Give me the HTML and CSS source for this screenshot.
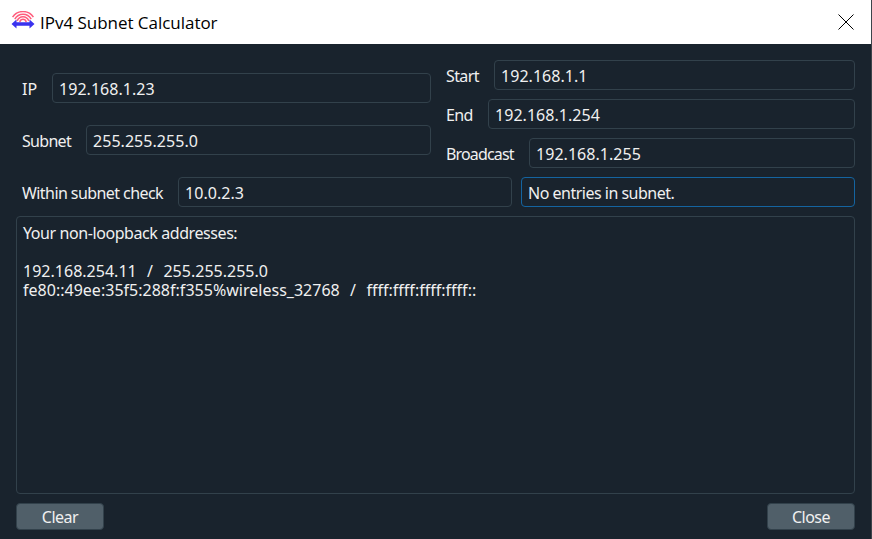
FILE: index.html
```html
<!DOCTYPE html>
<html lang="en">
<head>
<meta charset="utf-8">
<title>IPv4 Subnet Calculator</title>
<link rel="stylesheet" href="styles.css">
</head>
<body>
<div class="window">
  <header class="titlebar">
    <svg class="app-icon" width="24" height="18" viewBox="0 0 24 18">
      <g fill="none" stroke="#ff5c7c" stroke-width="1.5">
        <path d="M1.600 6.200C6.500-1.300 17.500-1.300 22.400 6.200"/>
        <path d="M3.800 8.200C7.500 1.600 16.500 1.600 20.200 8.200"/>
        <path d="M6.200 9.900C8.500 4.500 15.500 4.500 17.800 9.900"/>
        <path d="M8.700 11C10 7.300 14 7.300 15.300 11"/>
      </g>
      <path fill="#3a32ee" d="M.5 13 5.500 8.500V11.200H18.500V8.500L23.500 13 18.500 17.500V14.800H5.500V17.500Z"/>
    </svg>
    <h1 class="title">IPv4 Subnet Calculator</h1>
    <svg class="close-icon" width="16" height="16" viewBox="0 0 16 16"><path d="M.5.500 15.500 15.500M15.500.500.500 15.500" stroke="#000" stroke-width="1"/></svg>
  </header>
  <main class="content">
    <div class="top">
      <div class="inputs">
        <div class="row"><span class="label ip">IP</span><div class="field">192.168.1.23</div></div>
        <div class="row"><span class="label subnet">Subnet</span><div class="field">255.255.255.0</div></div>
      </div>
      <div class="results">
        <div class="row"><span class="label start">Start</span><div class="field">192.168.1.1</div></div>
        <div class="row"><span class="label end">End</span><div class="field">192.168.1.254</div></div>
        <div class="row"><span class="label broadcast">Broadcast</span><div class="field">192.168.1.255</div></div>
      </div>
    </div>
    <div class="row check">
      <span class="label within">Within subnet check</span>
      <div class="field">10.0.2.3</div>
      <div class="field status">No entries in subnet.</div>
    </div>
    <div class="log">
      <p class="line heading">Your non-loopback addresses:</p>
      <p class="line address">192.168.254.11&nbsp; /&nbsp; 255.255.255.0</p>
      <p class="line address">fe80::49ee:35f5:288f:f355%wireless_32768&nbsp; /&nbsp; ffff:ffff:ffff:ffff::</p>
    </div>
    <footer class="actions"><button class="button">Clear</button><button class="button">Close</button></footer>
  </main>
</div>
</body>
</html>
```
FILE: styles.css
```css
* { box-sizing: border-box; }
body { margin: 0; background: #19232d; overflow: hidden; }
.window { width: 872px; height: 539px; display: flex; flex-direction: column; border-right: 1px solid #3d444b; background: #19232d; }
.titlebar { height: 44px; flex: none; display: flex; align-items: center; padding: 0 17px 0 11px; background: #fff; color: #000; }
.app-icon { margin: 0 5px 4px 0; }
.title { margin: 0; padding-top: 1px; font: 400 17px/24px "Open Sans", sans-serif; letter-spacing: -0.03px; flex: 1; white-space: nowrap; }
.close-icon { margin-bottom: 1px; }
.content { flex: 1; padding: 16px 16px 9px; display: flex; flex-direction: column; gap: 9px; color: #f0f0f0; font: 16px/19px "Noto Sans", sans-serif; }
.top { display: flex; gap: 9px; height: 108px; }
.inputs { width: 415px; display: flex; flex-direction: column; padding-top: 13px; gap: 22px; }
.results { flex: 1; display: flex; flex-direction: column; gap: 9px; }
.row { display: flex; height: 30px; }
.label { flex: none; padding: 7px 0 0 6px; white-space: nowrap; }
.ip { width: 36px; }
.subnet { width: 70px; letter-spacing: -0.7px; }
.start { width: 54px; letter-spacing: -0.6px; }
.end { width: 48px; letter-spacing: -0.6px; }
.broadcast { width: 89px; letter-spacing: -0.85px; }
.within { width: 162px; letter-spacing: -0.57px; }
.field { flex: 1; border: 1px solid #32414b; border-radius: 4px; padding: 6px; white-space: nowrap; letter-spacing: 0.04px; }
.status { flex: none; width: 334px; margin-left: 9px; border-color: #1464a0; letter-spacing: -0.5px; }
.log { flex: 1; border: 1px solid #32414b; border-radius: 4px; padding: 7px 6px; white-space: nowrap; }
.line { margin: 0; height: 19px; }
.heading { margin-bottom: 19px; letter-spacing: -0.42px; }
.address { word-spacing: 1px; letter-spacing: 0.015px; }
.actions { display: flex; justify-content: space-between; height: 27px; }
.button { width: 88px; height: 27px; border: 1px solid #32414b; border-radius: 4px; background: #505f69; color: #f0f0f0; font: inherit; letter-spacing: -0.5px; padding: 1px 0 0; }
```
